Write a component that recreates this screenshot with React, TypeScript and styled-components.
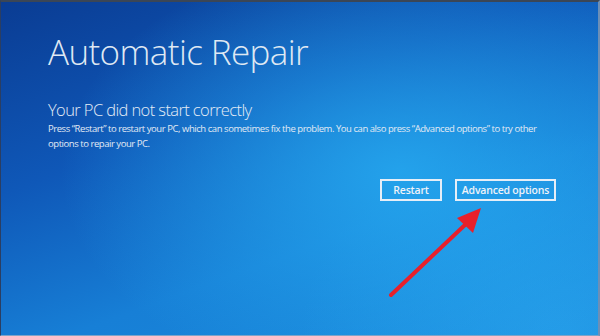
import React from "react";
import styled, { createGlobalStyle } from "styled-components";

const GlobalStyle = createGlobalStyle`
  html, body {
    margin: 0;
    padding: 0;
    background: #0b3f98;
  }
`;

const Screen = styled.div`
  position: relative;
  width: 600px;
  height: 336px;
  overflow: hidden;
  box-sizing: border-box;
  border-top: 2px solid #3b4656;
  border-left: 1px solid #2b3e62;
  border-right: 2px solid #6d8fb6;
  border-bottom: 1px solid #7ea3c8;
  font-family: "Open Sans", "Noto Sans", sans-serif;
  color: #e4ecf5;
  background:
    radial-gradient(ellipse 340px 220px at 400px 170px, rgba(38, 170, 240, 0.85), rgba(38, 170, 240, 0) 100%),
    radial-gradient(ellipse 260px 200px at 560px 330px, rgba(40, 160, 235, 0.7), rgba(40, 160, 235, 0) 100%),
    linear-gradient(160deg, #0a3c93 0%, #0f58b8 35%, #177fd6 65%, #1b8ddd 100%);
`;

const Content = styled.div`
  display: flex;
  flex-direction: column;
  padding: 24px 42px 0 47px;
`;

const Title = styled.h1`
  margin: 0;
  font-weight: 300;
  font-size: 35px;
  line-height: 52px;
  letter-spacing: -0.6px;
  color: #dfe8f3;
`;

const Subtitle = styled.h2`
  margin: 21px 0 0;
  font-weight: 300;
  font-size: 16.5px;
  line-height: 22px;
  letter-spacing: -0.6px;
  color: #e4ecf6;
`;

const Body = styled.p`
  margin: 0;
  font-size: 9.5px;
  line-height: 15px;
  letter-spacing: -0.45px;
  color: #e2eaf4;
`;

const Actions = styled.div`
  display: flex;
  justify-content: flex-end;
  gap: 13px;
  margin-top: 28px;
`;

const Button = styled.button<{ $w: number }>`
  box-sizing: border-box;
  width: ${({ $w }) => $w}px;
  height: 22px;
  padding: 0;
  background: transparent;
  border: 2px solid #e6eef7;
  color: #eef3f9;
  font-family: "Open Sans", "Noto Sans", sans-serif;
  font-weight: 600;
  font-size: 10.5px;
  letter-spacing: -0.2px;
`;

const Annotation = styled.svg`
  position: absolute;
  left: 0;
  top: 0;
  pointer-events: none;
`;

export default function App() {
  return (
    <>
      <GlobalStyle />
      <Screen>
        <Content>
          <Title>Automatic Repair</Title>
          <Subtitle>Your PC did not start correctly</Subtitle>
          <Body>
            Press “Restart” to restart your PC, which can sometimes fix the
            problem. You can also press “Advanced options” to try other
            <br />
            options to repair your PC.
          </Body>
          <Actions>
            <Button $w={62}>Restart</Button>
            <Button $w={101}>Advanced options</Button>
          </Actions>
        </Content>
        <Annotation width="600" height="336" viewBox="0 0 600 336">
          <line
            x1="390"
            y1="293"
            x2="466"
            y2="221"
            stroke="#e8202b"
            strokeWidth="4"
            strokeLinecap="round"
          />
          <polygon points="480,206 456,216 472,231" fill="#e8202b" />
        </Annotation>
      </Screen>
    </>
  );
}
